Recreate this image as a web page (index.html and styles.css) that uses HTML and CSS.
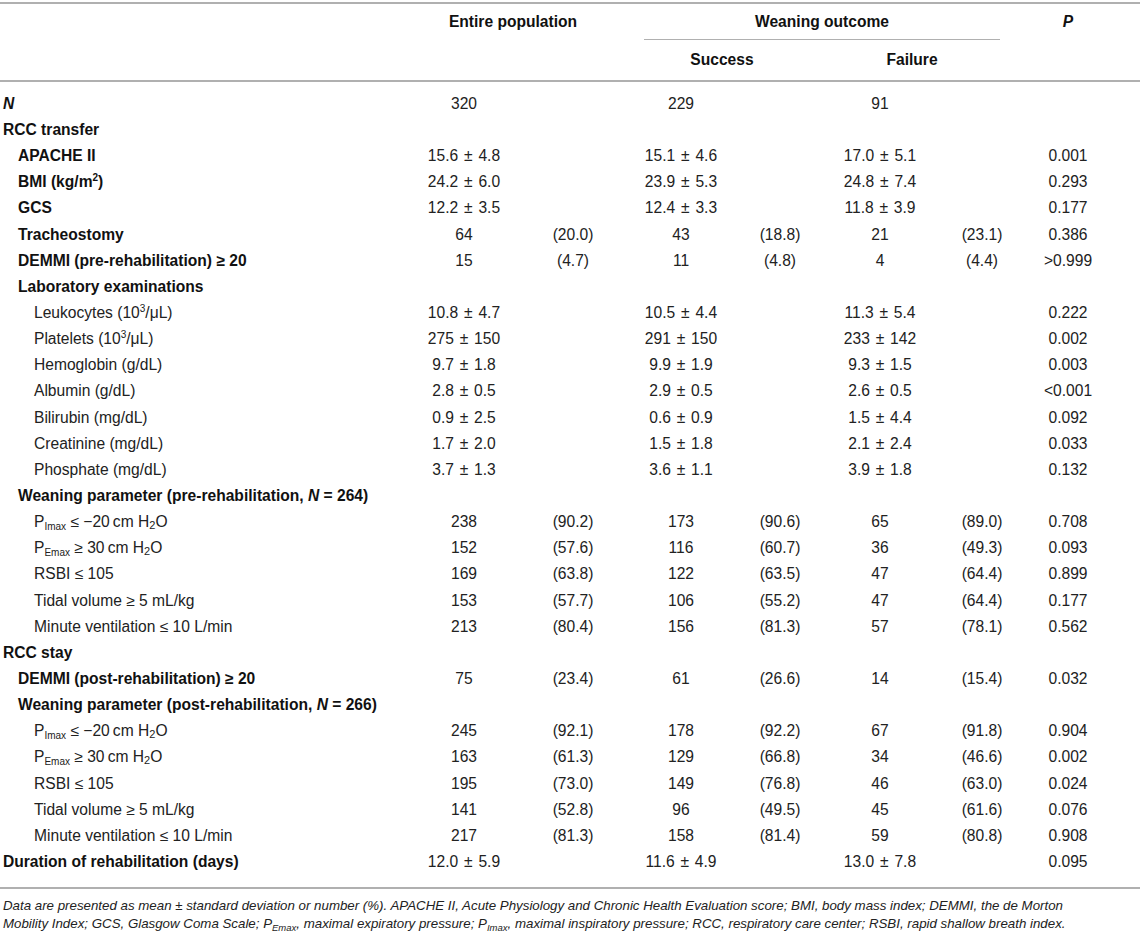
FILE: index.html
```html
<!DOCTYPE html>
<html lang="en">
<head>
<meta charset="utf-8">
<title>Table</title>
<link rel="stylesheet" href="styles.css">
</head>
<body>
<div class="page">
<table class="t">
  <colgroup>
    <col class="c-label"><col class="c-ev"><col class="c-ep"><col class="c-sv"><col class="c-sp"><col class="c-fv"><col class="c-fp"><col class="c-p">
  </colgroup>
  <thead>
    <tr class="h1">
      <th></th>
      <th colspan="2" class="h-entire">Entire population</th>
      <th colspan="4" class="h-wean"><div class="wean-line">Weaning outcome</div></th>
      <th class="h-p"><i>P</i></th>
    </tr>
    <tr class="h2">
      <th></th>
      <th colspan="2"></th>
      <th colspan="2" class="h-succ">Success</th>
      <th colspan="2" class="h-fail">Failure</th>
      <th></th>
    </tr>
  </thead>
  <tbody>
    <tr class="first"><td class="lab b0"><b><i>N</i></b></td><td>320</td><td></td><td>229</td><td></td><td>91</td><td></td><td class="p"></td></tr>
    <tr><td class="lab b0"><b>RCC transfer</b></td><td></td><td></td><td></td><td></td><td></td><td></td><td class="p"></td></tr>
    <tr><td class="lab b1"><b>APACHE II</b></td><td>15.6 ± 4.8</td><td></td><td>15.1 ± 4.6</td><td></td><td>17.0 ± 5.1</td><td></td><td class="p">0.001</td></tr>
    <tr><td class="lab b1"><b>BMI (kg/m<sup>2</sup>)</b></td><td>24.2 ± 6.0</td><td></td><td>23.9 ± 5.3</td><td></td><td>24.8 ± 7.4</td><td></td><td class="p">0.293</td></tr>
    <tr><td class="lab b1"><b>GCS</b></td><td>12.2 ± 3.5</td><td></td><td>12.4 ± 3.3</td><td></td><td>11.8 ± 3.9</td><td></td><td class="p">0.177</td></tr>
    <tr><td class="lab b1"><b>Tracheostomy</b></td><td>64</td><td>(20.0)</td><td>43</td><td>(18.8)</td><td>21</td><td>(23.1)</td><td class="p">0.386</td></tr>
    <tr><td class="lab b1"><b>DEMMI (pre-rehabilitation) ≥ 20</b></td><td>15</td><td>(4.7)</td><td>11</td><td>(4.8)</td><td>4</td><td>(4.4)</td><td class="p">&gt;0.999</td></tr>
    <tr><td class="lab b1"><b>Laboratory examinations</b></td><td></td><td></td><td></td><td></td><td></td><td></td><td class="p"></td></tr>
    <tr><td class="lab i2">Leukocytes (10<sup>3</sup>/μL)</td><td>10.8 ± 4.7</td><td></td><td>10.5 ± 4.4</td><td></td><td>11.3 ± 5.4</td><td></td><td class="p">0.222</td></tr>
    <tr><td class="lab i2">Platelets (10<sup>3</sup>/μL)</td><td>275 ± 150</td><td></td><td>291 ± 150</td><td></td><td>233 ± 142</td><td></td><td class="p">0.002</td></tr>
    <tr><td class="lab i2">Hemoglobin (g/dL)</td><td>9.7 ± 1.8</td><td></td><td>9.9 ± 1.9</td><td></td><td>9.3 ± 1.5</td><td></td><td class="p">0.003</td></tr>
    <tr><td class="lab i2">Albumin (g/dL)</td><td>2.8 ± 0.5</td><td></td><td>2.9 ± 0.5</td><td></td><td>2.6 ± 0.5</td><td></td><td class="p">&lt;0.001</td></tr>
    <tr><td class="lab i2">Bilirubin (mg/dL)</td><td>0.9 ± 2.5</td><td></td><td>0.6 ± 0.9</td><td></td><td>1.5 ± 4.4</td><td></td><td class="p">0.092</td></tr>
    <tr><td class="lab i2">Creatinine (mg/dL)</td><td>1.7 ± 2.0</td><td></td><td>1.5 ± 1.8</td><td></td><td>2.1 ± 2.4</td><td></td><td class="p">0.033</td></tr>
    <tr><td class="lab i2">Phosphate (mg/dL)</td><td>3.7 ± 1.3</td><td></td><td>3.6 ± 1.1</td><td></td><td>3.9 ± 1.8</td><td></td><td class="p">0.132</td></tr>
    <tr><td class="lab b1"><b>Weaning parameter (pre-rehabilitation, <i>N</i> = 264)</b></td><td></td><td></td><td></td><td></td><td></td><td></td><td class="p"></td></tr>
    <tr><td class="lab i2">P<sub>Imax</sub> ≤ −20&#8201;cm H<sub class="n">2</sub>O</td><td>238</td><td>(90.2)</td><td>173</td><td>(90.6)</td><td>65</td><td>(89.0)</td><td class="p">0.708</td></tr>
    <tr><td class="lab i2">P<sub>Emax</sub> ≥ 30&#8201;cm H<sub class="n">2</sub>O</td><td>152</td><td>(57.6)</td><td>116</td><td>(60.7)</td><td>36</td><td>(49.3)</td><td class="p">0.093</td></tr>
    <tr><td class="lab i2">RSBI ≤ 105</td><td>169</td><td>(63.8)</td><td>122</td><td>(63.5)</td><td>47</td><td>(64.4)</td><td class="p">0.899</td></tr>
    <tr><td class="lab i2">Tidal volume ≥ 5 mL/kg</td><td>153</td><td>(57.7)</td><td>106</td><td>(55.2)</td><td>47</td><td>(64.4)</td><td class="p">0.177</td></tr>
    <tr><td class="lab i2">Minute ventilation ≤ 10 L/min</td><td>213</td><td>(80.4)</td><td>156</td><td>(81.3)</td><td>57</td><td>(78.1)</td><td class="p">0.562</td></tr>
    <tr><td class="lab b0"><b>RCC stay</b></td><td></td><td></td><td></td><td></td><td></td><td></td><td class="p"></td></tr>
    <tr><td class="lab b1"><b>DEMMI (post-rehabilitation) ≥ 20</b></td><td>75</td><td>(23.4)</td><td>61</td><td>(26.6)</td><td>14</td><td>(15.4)</td><td class="p">0.032</td></tr>
    <tr><td class="lab b1"><b>Weaning parameter (post-rehabilitation, <i>N</i> = 266)</b></td><td></td><td></td><td></td><td></td><td></td><td></td><td class="p"></td></tr>
    <tr><td class="lab i2">P<sub>Imax</sub> ≤ −20&#8201;cm H<sub class="n">2</sub>O</td><td>245</td><td>(92.1)</td><td>178</td><td>(92.2)</td><td>67</td><td>(91.8)</td><td class="p">0.904</td></tr>
    <tr><td class="lab i2">P<sub>Emax</sub> ≥ 30&#8201;cm H<sub class="n">2</sub>O</td><td>163</td><td>(61.3)</td><td>129</td><td>(66.8)</td><td>34</td><td>(46.6)</td><td class="p">0.002</td></tr>
    <tr><td class="lab i2">RSBI ≤ 105</td><td>195</td><td>(73.0)</td><td>149</td><td>(76.8)</td><td>46</td><td>(63.0)</td><td class="p">0.024</td></tr>
    <tr><td class="lab i2">Tidal volume ≥ 5 mL/kg</td><td>141</td><td>(52.8)</td><td>96</td><td>(49.5)</td><td>45</td><td>(61.6)</td><td class="p">0.076</td></tr>
    <tr><td class="lab i2">Minute ventilation ≤ 10 L/min</td><td>217</td><td>(81.3)</td><td>158</td><td>(81.4)</td><td>59</td><td>(80.8)</td><td class="p">0.908</td></tr>
    <tr class="last"><td class="lab b0"><b>Duration of rehabilitation (days)</b></td><td>12.0 ± 5.9</td><td></td><td>11.6 ± 4.9</td><td></td><td>13.0 ± 7.8</td><td></td><td class="p">0.095</td></tr>
  </tbody>
</table>
<p class="note">Data are presented as mean ± standard deviation or number (%). APACHE II, Acute Physiology and Chronic Health Evaluation score; BMI, body mass index; DEMMI, the de Morton<br>Mobility Index; GCS, Glasgow Coma Scale; P<sub>Emax</sub>, maximal expiratory pressure; P<sub>Imax</sub>, maximal inspiratory pressure; RCC, respiratory care center; RSBI, rapid shallow breath index.</p>
</div>
</body>
</html>
```

FILE: styles.css
```css
* { box-sizing: border-box; }
html, body { margin: 0; padding: 0; background: #fff; }
body {
  font-family: "Liberation Sans", Arial, Helvetica, sans-serif;
  color: #222;
}
.page {
  width: 1140px;
  padding-top: 2px;
}
.t {
  width: 1140px;
  border-collapse: collapse;
  table-layout: fixed;
  font-size: 15.6px;
  border-top: 2px solid #b0b0b0;
  border-bottom: 2px solid #b0b0b0;
}
.c-label { width: 410px; }
.c-ev { width: 108px; }
.c-ep { width: 110px; }
.c-sv { width: 106px; }
.c-sp { width: 92px; }
.c-fv { width: 108px; }
.c-fp { width: 96px; }

.t th {
  padding: 0;
  font-weight: bold;
  color: #111;
  text-align: center;
}
.t thead { border-bottom: 2px solid #b0b0b0; }
.h1 th { height: 36px; vertical-align: top; line-height: 35px; }
.h-entire { padding-right: 12px !important; }
.wean-line {
  margin: 0 30px 0 16px;
  border-bottom: 1px solid #b0b0b0;
  height: 36px;
}
.h-p { padding-right: 34px !important; }
.h2 th { height: 40px; line-height: 40px; }
.h-succ { padding-right: 10px !important; }
.h-fail { padding-right: 32px !important; }

.t td {
  padding: 0;
  height: 26.15px;
  line-height: 26px;
  text-align: center;
  white-space: nowrap;
  vertical-align: middle;
  word-spacing: 1.5px;
}
.t td.lab { word-spacing: 0; }
.t td.p { padding-right: 34px; }
.t tr.first td { padding-top: 9px; height: 35px; }
.t tr.last td { padding-bottom: 12px; height: 38px; }
.t td.lab { text-align: left; color: #111; }
.b0 { padding-left: 3px !important; }
.b1 { padding-left: 18px !important; }
.i2 { padding-left: 34px !important; color: #222 !important; }

sup { font-size: 10px; vertical-align: 6px; line-height: 0; }
sub { font-size: 10px; vertical-align: -3px; line-height: 0; }
sub.n { font-size: 11px; vertical-align: -2px; }

.note {
  margin: 8px 0 0 3px;
  font-style: italic;
  font-size: 13.3px;
  line-height: 18px;
  color: #222;
}
.note sub { font-size: 9.5px; vertical-align: -3px; }
```
